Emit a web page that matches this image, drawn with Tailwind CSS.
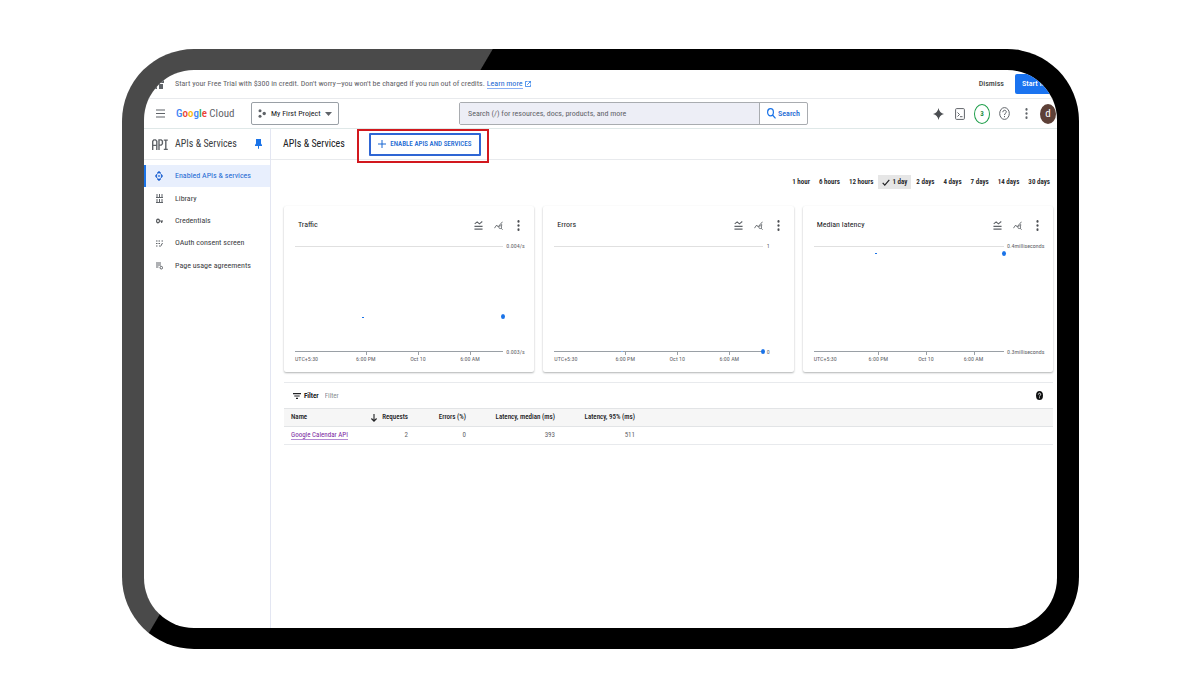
<!DOCTYPE html>
<html lang="en">
<head>
<meta charset="utf-8">
<meta name="viewport" content="width=device-width, initial-scale=1">
<title>APIs &amp; Services – Google Cloud</title>
<script src="https://cdn.jsdelivr.net/npm/@tailwindcss/browser@4"></script>
</head>
<body class="flex min-h-screen bg-white pt-[49px] pr-[121px] pb-12 pl-[122px] font-['Roboto_Condensed','Roboto',sans-serif] text-[8px] leading-[10px] text-[#202124]">

<svg class="hidden" aria-hidden="true">
  <symbol id="legend" viewBox="0 0 10 10" preserveAspectRatio="none"><path d="M.8 3.200 3.500 1 6 3.200 9.200.6M.5 6h9M.5 9h9" fill="none" stroke="#5f6368" stroke-width="1.200"/></symbol>
  <symbol id="explore" viewBox="0 0 10 10" preserveAspectRatio="none"><path d="M.5 8 3 4.500 4.500 6.500 9.500.8M8 8 9.500 9.700M8.500 3.500v2" fill="none" stroke="#5f6368" stroke-width="1"/><circle cx="6.900" cy="6.800" r="1.600" fill="none" stroke="#5f6368" stroke-width=".9"/></symbol>
  <symbol id="dots" viewBox="0 0 4 12" preserveAspectRatio="none"><circle cx="2" cy="1.500" r="1.400"/><circle cx="2" cy="6" r="1.400"/><circle cx="2" cy="10.500" r="1.400"/></symbol>
</svg>

<!-- Tablet bezel with a diagonal sheen -->
<div class="flex grow rounded-[72px] bg-[linear-gradient(120.5deg,#4a4a4a_319px,#000_320px)] px-[22px] py-[21px]">
  <div class="flex min-w-0 grow flex-col overflow-hidden rounded-[50px] bg-white">

    <section class="flex h-[29px] shrink-0 items-center border-b border-[#e8eaed] pl-2" aria-label="Free trial">
      <svg class="mr-[11px] h-[10px] w-[12px] shrink-0" viewBox="0 0 12 10" preserveAspectRatio="none" fill="#5f6368"><path d="M0 0h5v4H0zM7 0h5v4H7zM1 5h4v5H1zM7 5h4v5H7z"/></svg>
      <p class="text-[#5f6368]">Start your Free Trial with $300 in credit. Don't worry—you won't be charged if you run out of credits.</p>
      <a href="#" class="ml-[2px] border-b border-[#8ab0f5] leading-[9px] text-[#1967d2]">Learn more</a>
      <svg class="ml-[2px] size-[6px] shrink-0" viewBox="0 0 7 7" fill="none" stroke="#1a73e8" stroke-width=".9"><path d="M3 .5H.5v6h6V4M4 .5h2.500V3M6.500.5 2.500 4.500"/></svg>
      <button class="mr-[11px] ml-auto font-medium text-[#444746]">Dismiss</button>
      <button class="h-5 w-[42px] shrink-0 overflow-hidden rounded-l-[2px] bg-[#1a73f0] pl-[7px] text-left font-medium whitespace-nowrap text-white">Start free</button>
    </section>

    <header class="flex h-[30px] shrink-0 items-center border-b border-[#dfe8e8] pr-px pl-3">
      <button aria-label="Main menu"><svg class="h-[9px] w-[9px]" viewBox="0 0 9 9" stroke="#5f6368" stroke-width="1.200"><path d="M0 1h9M0 4.500h9M0 8h9"/></svg></button>
      <a href="#" class="ml-[11px] w-[59px] shrink-0 text-[11px] leading-[14px] whitespace-nowrap text-[#5f6368]"><span class="font-medium"><span class="text-[#4285f4]">G</span><span class="text-[#ea4335]">o</span><span class="text-[#fbbc04]">o</span><span class="text-[#4285f4]">g</span><span class="text-[#34a853]">l</span><span class="text-[#ea4335]">e</span></span> Cloud</a>
      <button class="ml-4 flex h-[23px] w-[88px] shrink-0 items-center rounded-[2px] border border-[#9aa0a6] px-[6px] text-[#202124]">
        <svg class="mr-[5px] h-[9px] w-[8px]" viewBox="0 0 8 9" preserveAspectRatio="none" fill="#5f6368"><circle cx="2" cy="1.800" r="1.500"/><circle cx="6.200" cy="4.500" r="1.700"/><circle cx="2" cy="7.200" r="1.500"/></svg>
        My First Project
        <svg class="ml-auto h-1 w-[7px]" viewBox="0 0 7 4" fill="#5f6368"><path d="M0 0h7L3.500 4z"/></svg>
      </button>
      <form class="ml-[120px] flex h-[23px] w-[349px] rounded-[2px] border border-[#a9acb0]">
        <input aria-label="Search" placeholder="Search (/) for resources, docs, products, and more" class="min-w-0 grow bg-[#edeef6] px-2 placeholder:text-[#5f6368]">
        <button type="button" class="flex w-[48px] items-center justify-center gap-[2px] border-l border-[#a9acb0] font-medium text-[#1967d2]">
          <svg class="h-[11px] w-[9px]" viewBox="0 0 9 11" preserveAspectRatio="none" fill="none" stroke="#1a73e8" stroke-width="1.200"><ellipse cx="3.500" cy="4.300" rx="2.900" ry="3.600"/><path d="M5.500 7 8.500 10.400"/></svg>Search</button>
      </form>
      <div class="ml-auto flex shrink-0 items-center gap-[6px]">
        <button aria-label="Gemini" class="flex w-4 justify-center"><svg class="h-3 w-[11px]" viewBox="0 0 12 12" preserveAspectRatio="none" fill="#4b4e52"><path d="M6 0Q7 5 12 6 7 7 6 12 5 7 0 6 5 5 6 0z"/></svg></button>
        <button aria-label="Cloud Shell" class="flex w-4 justify-center"><svg class="h-[12px] w-[10px]" viewBox="0 0 10 12" fill="none" stroke="#5f6368"><rect x=".6" y=".6" width="8.800" height="10.800" rx="1"/><path d="m2.500 4.500 2 2-2 2M5 8.700h2.500"/></svg></button>
        <button aria-label="Notifications" class="h-5 w-4 rounded-[50%] border border-[#1e9e4a] text-[7px] font-bold text-[#1e8e3e]">3</button>
        <button aria-label="Help" class="flex w-4 justify-center"><svg class="h-[13px] w-[11px]" viewBox="0 0 11 13" fill="none" stroke="#5f6368"><ellipse cx="5.500" cy="6.500" rx="4.800" ry="5.900"/><path d="M3.800 5.200c0-2.600 3.500-2.500 3.500-.3C7.300 6.300 5.500 6.300 5.500 8M5.500 9v1.200"/></svg></button>
        <button aria-label="More" class="flex w-4 justify-center"><svg class="h-[11px] w-[3px]" fill="#5f6368"><use href="#dots"/></svg></button>
        <button aria-label="Account" class="h-5 w-4 rounded-[50%] bg-[#5d4037] text-[11px] text-white">d</button>
      </div>
    </header>

    <div class="flex min-h-0 grow">
      <nav class="flex w-[127px] shrink-0 flex-col border-r border-[#e3e6f2]" aria-label="APIs and services">
        <div class="flex h-[31px] items-center border-b border-[#e8eaed] px-2">
          <svg class="h-[11px] w-[16px]" viewBox="0 0 16 12" preserveAspectRatio="none" fill="none" stroke="#5f6368" stroke-width="1.400"><path d="M.7 12V2.500L1.900 1h1.700l1.200 1.500V12M.7 7h4.100M7 12V1h2.200l1.200 1.300v3L9.200 6.700H7M11.800 1.200h4M11.800 11.200h4M13.800 1v10"/></svg>
          <h2 class="ml-[7px] text-[10px] text-[#3c4043]">APIs &amp; Services</h2>
          <button aria-label="Unpin" class="ml-auto"><svg class="h-[10px] w-[7px]" viewBox="0 0 7 10" fill="#1a73e8"><path d="M1 0h5v4.500L7 6v1H4v2.500L3.500 10 3 9.500V7H0V6l1-1.500z"/></svg></button>
        </div>
        <ul class="mt-[5px] grid h-[112px] grid-rows-5 text-[#3c4043]">
          <li class="flex"><a href="#" class="flex grow items-center border-l-2 border-[#1a73e8] bg-[#e8effd] pl-[9px] text-[#1967d2]"><svg class="mr-3 h-[10px] w-[8px]" viewBox="0 0 8 10" preserveAspectRatio="none" fill="none" stroke="#1a5fd0" stroke-width="1.400"><path d="M2.300 2.600 4 .9l1.700 1.700M2.300 7.400 4 9.100l1.700-1.700M2 3.300.8 5 2 6.700M6 3.300 7.200 5 6 6.700M3.200 5h1.600"/></svg>Enabled APIs &amp; services</a></li>
          <li class="flex"><a href="#" class="flex grow items-center pl-3"><svg class="mr-3 h-[9px] w-[7px]" viewBox="0 0 7 9" preserveAspectRatio="none" fill="none" stroke="#5f6368"><path d="M1 0v3M3.500 0v3M6 0v3M0 3.500h7M1 5v3M3.500 5v3M6 5v3M0 8.500h7"/></svg>Library</a></li>
          <li class="flex"><a href="#" class="flex grow items-center pl-3"><svg class="mr-3 h-[6px] w-[7px]" viewBox="0 0 7 6" fill="none" stroke="#4b4e52" stroke-width="1.100"><ellipse cx="2" cy="3" rx="1.400" ry="1.900"/><path d="M3.400 3H7M5.700 3v2"/></svg>Credentials</a></li>
          <li class="flex"><a href="#" class="flex grow items-center pl-3"><svg class="mr-3 h-[7px] w-[7px]" viewBox="0 0 7 7" fill="none" stroke="#5f6368"><path d="M0 1h1.500M2.500 1H4M5.500 1H7M0 3.500h1.500M2.500 3.500H4M0 6h1.500M3 6h1M6.500 3 4.500 6.500"/></svg>OAuth consent screen</a></li>
          <li class="flex"><a href="#" class="flex grow items-center pl-3"><svg class="mr-3 h-[8px] w-[7px]" viewBox="0 0 7 8" fill="none" stroke="#5f6368"><path d="M0 1h5M0 3h5M0 5h2.500"/><circle cx="5.300" cy="5.700" r="1.300"/></svg>Page usage agreements</a></li>
        </ul>
      </nav>

      <main class="flex min-w-0 grow flex-col">
        <div class="flex h-[31px] shrink-0 items-center border-b border-[#e8eaed] pl-3">
          <h1 class="text-[10px] font-normal">APIs &amp; Services</h1>
          <div class="relative ml-6">
            <button class="flex h-[23px] w-[112px] items-center justify-center gap-[4px] rounded-[1px] border-2 border-[#2f66d4] text-[7px] font-medium text-[#1967d2]">
              <svg class="size-[8px]" viewBox="0 0 8 8" stroke="#1967d2"><path d="M4 0v8M0 4h8"/></svg>ENABLE APIS AND SERVICES</button>
            <span class="pointer-events-none absolute -top-[4px] -right-2 -bottom-[7px] -left-[12px] border-2 border-[#d2181e]"></span>
          </div>
        </div>

        <div class="flex grow flex-col pr-1 pl-[13px]">
          <div class="mt-[15px] flex h-[14px] items-center justify-end gap-[9px] pr-[3px] text-[7px] font-semibold">
            <button>1 hour</button><button>6 hours</button><button>12 hours</button>
            <button class="-mx-1 flex h-[14px] items-center gap-[2px] bg-[#e6e6e6] px-1" aria-pressed="true"><svg class="h-[7px] w-[8px]" viewBox="0 0 8 7" fill="none" stroke="#202124" stroke-width="1.200"><path d="m.7 3.800 2.100 2.300L7.300.8"/></svg>1 day</button>
            <button>2 days</button><button>4 days</button><button>7 days</button><button>14 days</button><button>30 days</button>
          </div>

          <div class="mt-[17px] grid grid-cols-3 gap-x-[9px] text-[6px] leading-[8px] text-[#5f6368]">

            <section class="flex h-[166px] flex-col rounded-[2px] shadow-[0_1px_2px_rgba(60,64,67,0.4)]">
              <div class="mt-[12px] flex h-[14px] items-center gap-[11px] px-[14px]">
                <h3 class="mr-auto text-[8px] text-[#202124]">Traffic</h3>
                <button aria-label="Legend"><svg class="h-[9px] w-[9px]"><use href="#legend"/></svg></button>
                <button aria-label="Explore" class="mr-[3px]"><svg class="h-[9px] w-[9px]"><use href="#explore"/></svg></button>
                <button aria-label="More options"><svg class="h-[11px] w-[3px]" fill="#4b4e52"><use href="#dots"/></svg></button>
              </div>
              <div class="mt-[14px] flex h-[106px] gap-[3px] pl-[11px]">
                <div class="relative grow border-t border-b border-t-[#e0e0e0] border-b-[#9aa0a6]">
                  <i class="absolute top-[67%] left-[32%] h-px w-[2px] bg-[#1a73e8]"></i>
                  <i class="absolute top-[67%] left-full -mt-[3px] -ml-[2px] h-[5px] w-[4px] rounded-[50%] bg-[#1a73e8]"></i>
                  <i class="absolute top-full left-[34%] h-1 w-px bg-[#9aa0a6]"></i><i class="absolute top-full left-[59%] h-1 w-px bg-[#9aa0a6]"></i><i class="absolute top-full left-[84%] h-1 w-px bg-[#9aa0a6]"></i>
                  <span class="absolute top-full left-0 mt-1">UTC+5:30</span><span class="absolute top-full left-[34%] mt-1 -translate-x-1/2 whitespace-nowrap">6:00 PM</span><span class="absolute top-full left-[59%] mt-1 -translate-x-1/2 whitespace-nowrap">Oct 10</span><span class="absolute top-full left-[84%] mt-1 -translate-x-1/2 whitespace-nowrap">6:00 AM</span>
                </div>
                <div class="-my-1 flex w-[28px] flex-col justify-between"><span>0.004/s</span><span>0.003/s</span></div>
              </div>
            </section>

            <section class="flex h-[166px] flex-col rounded-[2px] shadow-[0_1px_2px_rgba(60,64,67,0.4)]">
              <div class="mt-[12px] flex h-[14px] items-center gap-[11px] px-[14px]">
                <h3 class="mr-auto text-[8px] text-[#202124]">Errors</h3>
                <button aria-label="Legend"><svg class="h-[9px] w-[9px]"><use href="#legend"/></svg></button>
                <button aria-label="Explore" class="mr-[3px]"><svg class="h-[9px] w-[9px]"><use href="#explore"/></svg></button>
                <button aria-label="More options"><svg class="h-[11px] w-[3px]" fill="#4b4e52"><use href="#dots"/></svg></button>
              </div>
              <div class="mt-[14px] flex h-[106px] gap-[4px] pl-[11px]">
                <div class="relative grow border-t border-b border-t-[#e0e0e0] border-b-[#9aa0a6]">
                  <i class="absolute top-full left-[32%] h-px w-[2px] bg-[#8ab8f5]"></i>
                  <i class="absolute top-full left-full -mt-[2px] -ml-[2px] h-[5px] w-[4px] rounded-[50%] bg-[#1a73e8]"></i>
                  <i class="absolute top-full left-[34%] h-1 w-px bg-[#9aa0a6]"></i><i class="absolute top-full left-[59%] h-1 w-px bg-[#9aa0a6]"></i><i class="absolute top-full left-[84%] h-1 w-px bg-[#9aa0a6]"></i>
                  <span class="absolute top-full left-0 mt-1">UTC+5:30</span><span class="absolute top-full left-[34%] mt-1 -translate-x-1/2 whitespace-nowrap">6:00 PM</span><span class="absolute top-full left-[59%] mt-1 -translate-x-1/2 whitespace-nowrap">Oct 10</span><span class="absolute top-full left-[84%] mt-1 -translate-x-1/2 whitespace-nowrap">6:00 AM</span>
                </div>
                <div class="-my-1 flex w-[27px] flex-col justify-between"><span>1</span><span>0</span></div>
              </div>
            </section>

            <section class="flex h-[166px] flex-col rounded-[2px] shadow-[0_1px_2px_rgba(60,64,67,0.4)]">
              <div class="mt-[12px] flex h-[14px] items-center gap-[11px] px-[14px]">
                <h3 class="mr-auto text-[8px] text-[#202124]">Median latency</h3>
                <button aria-label="Legend"><svg class="h-[9px] w-[9px]"><use href="#legend"/></svg></button>
                <button aria-label="Explore" class="mr-[3px]"><svg class="h-[9px] w-[9px]"><use href="#explore"/></svg></button>
                <button aria-label="More options"><svg class="h-[11px] w-[3px]" fill="#4b4e52"><use href="#dots"/></svg></button>
              </div>
              <div class="mt-[14px] flex h-[106px] gap-[3px] pl-[11px]">
                <div class="relative grow border-t border-b border-t-[#e0e0e0] border-b-[#9aa0a6]">
                  <i class="absolute top-[6%] left-[32%] h-px w-[2px] bg-[#1a73e8]"></i>
                  <i class="absolute top-[6%] left-full -mt-[2px] -ml-[2px] h-[5px] w-[4px] rounded-[50%] bg-[#1a73e8]"></i>
                  <i class="absolute top-full left-[34%] h-1 w-px bg-[#9aa0a6]"></i><i class="absolute top-full left-[59%] h-1 w-px bg-[#9aa0a6]"></i><i class="absolute top-full left-[84%] h-1 w-px bg-[#9aa0a6]"></i>
                  <span class="absolute top-full left-0 mt-1">UTC+5:30</span><span class="absolute top-full left-[34%] mt-1 -translate-x-1/2 whitespace-nowrap">6:00 PM</span><span class="absolute top-full left-[59%] mt-1 -translate-x-1/2 whitespace-nowrap">Oct 10</span><span class="absolute top-full left-[84%] mt-1 -translate-x-1/2 whitespace-nowrap">6:00 AM</span>
                </div>
                <div class="-my-1 flex w-[46px] flex-col justify-between"><span>0.4milliseconds</span><span>0.3milliseconds</span></div>
              </div>
            </section>
          </div>

          <div class="mt-[10px] flex h-[26px] items-center border-t border-[#e8eaed] pr-[10px] pl-[9px] text-[7px]">
            <svg class="mr-[3px] h-[6px] w-[8px]" viewBox="0 0 8 6" stroke="#202124" stroke-width="1.200"><path d="M0 .6h8M1.300 3h5.400M3 5.400h2"/></svg>
            <label for="filter" class="mr-[6px] font-bold">Filter</label>
            <input id="filter" placeholder="Filter" class="w-40 placeholder:text-[#8a8d91]">
            <button aria-label="Filter help" class="ml-auto"><svg class="h-[9px] w-[7px]" viewBox="0 0 7 9"><ellipse cx="3.500" cy="4.500" rx="3.500" ry="4.500" fill="#101112"/><path d="M2.300 3.600c0-1.900 2.400-1.800 2.400-.2 0 1-1.200 1-1.200 2.100M3.500 6.300v1" fill="none" stroke="#fff" stroke-width=".9"/></svg></button>
          </div>
          <table class="w-full table-fixed text-[7px] leading-[9px] text-[#5f6368]">
            <colgroup><col class="w-[83px]"><col class="w-[41px]"><col class="w-[58px]"><col class="w-[89px]"><col class="w-[80px]"><col></colgroup>
            <thead>
              <tr class="h-[18px] border-y border-[#e2e4e6] bg-[#f6f6f6] text-right text-[#202124] [&>th]:p-0 [&>th]:font-medium">
                <th class="text-left"><span class="pl-[7px]">Name</span></th>
                <th><span class="flex items-center justify-between pl-1"><svg class="h-2 w-[6px]" viewBox="0 0 6 8" fill="none" stroke="#202124" stroke-width="1.100"><path d="M3 0v7M.4 4.500 3 7.200l2.600-2.700"/></svg>Requests</span></th>
                <th>Errors (%)</th><th>Latency, median (ms)</th><th>Latency, 95% (ms)</th><th></th>
              </tr>
            </thead>
            <tbody>
              <tr class="h-[18px] border-b border-[#e8eaed] text-right">
                <td class="text-left"><a href="#" class="ml-[7px] border-b border-[#b48bd3] text-[#7b1fa2]">Google Calendar API</a></td>
                <td>2</td><td>0</td><td>393</td><td>511</td><td></td>
              </tr>
            </tbody>
          </table>
        </div>
      </main>
    </div>
  </div>
</div>
</body>
</html>
